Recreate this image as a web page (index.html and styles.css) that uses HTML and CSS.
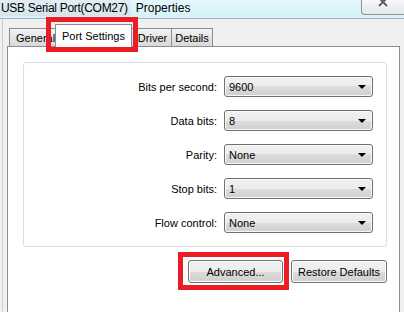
FILE: index.html
```html
<!DOCTYPE html>
<html>
<head>
<meta charset="utf-8">
<link rel="stylesheet" href="styles.css">
</head>
<body>
<div class="window">
  <div class="titlebar">
    <span class="title-app">USB Serial Port(COM27)</span>
    <span class="title-rest">Properties</span>
    <div class="close"><svg width="10" height="8" viewBox="0 0 10 8"><path d="M1 -2 L9 6 M9 -2 L1 6" stroke="#fff" stroke-width="4"/><path d="M1 -2 L9 6 M9 -2 L1 6" stroke="#5a5f66" stroke-width="2"/></svg></div>
  </div>
  <div class="body">
    <div class="tabs">
      <div class="tab first">General</div>
      <div class="tab active">Port Settings</div>
      <div class="tab driver">Driver</div>
      <div class="tab details">Details</div>
      <div class="mark mark-tab"></div>
    </div>
    <div class="panel">
      <div class="group">
        <div class="row"><span class="label">Bits per second:</span><div class="combo"><span>9600</span><i class="arrow"></i></div></div>
        <div class="row"><span class="label">Data bits:</span><div class="combo"><span>8</span><i class="arrow"></i></div></div>
        <div class="row"><span class="label">Parity:</span><div class="combo"><span>None</span><i class="arrow"></i></div></div>
        <div class="row"><span class="label">Stop bits:</span><div class="combo"><span>1</span><i class="arrow"></i></div></div>
        <div class="row"><span class="label">Flow control:</span><div class="combo"><span>None</span><i class="arrow"></i></div></div>
      </div>
      <div class="buttons">
        <div class="btn-wrap"><button class="btn adv">Advanced...</button><div class="mark mark-btn"></div></div>
        <button class="btn restore">Restore Defaults</button>
      </div>
    </div>
  </div>
</div>
</body>
</html>
```

FILE: styles.css
```css
* { box-sizing: border-box; }
html, body { margin: 0; padding: 0; }
body {
  width: 404px;
  height: 312px;
  overflow: hidden;
  background: #f0f0f0;
  font-family: "Liberation Sans", Arial, sans-serif;
  font-size: 11px;
  color: #000;
}
.window { width: 404px; height: 312px; }
.titlebar {
  height: 19px;
  display: flex;
  align-items: flex-start;
  background: linear-gradient(#e4f7fc, #d6f1f9);
  border-bottom: 1px solid #a9b3bb;
  font-size: 12px;
}
.title-app {
  height: 16px;
  padding: 1px 3px 0 1px;
  background: linear-gradient(#e2eef3, #d4e5ee);
  border-radius: 0 0 3px 0;
  letter-spacing: -0.3px;
}
.title-rest { padding: 1px 0 0 5px; }
.close {
  margin-left: auto;
  width: 43px;
  height: 15px;
  border: 1px solid #8d9299;
  border-top: none;
  border-right: none;
  border-radius: 0 0 0 4px;
  background: linear-gradient(#f6f8fa, #e3e8ec);
  display: flex;
  justify-content: center;
  align-items: flex-start;
}
.body {
  height: 292px;
  margin-left: 2px;
  border-left: 1px solid #c8cdd2;
  padding: 4px 4px 0 4px;
}
.tabs {
  position: relative;
  height: 24px;
  display: flex;
  align-items: flex-end;
  padding-left: 2px;
}
.tab {
  height: 19px;
  padding-top: 3px;
  text-align: center;
  border: 1px solid #898c95;
  border-bottom: none;
  background: linear-gradient(#f3f3f3, #e3e3e3 50%, #d8d8d8);
  margin-right: -1px;
  white-space: nowrap;
  overflow: hidden;
}
.tab.first { width: 48px; text-align: left; padding-left: 6px; }
.tab.active {
  position: relative;
  z-index: 1;
  height: 23px;
  margin: 0 -2px 0 -1px;
  padding-top: 5px;
  background: #fff;
  width: 77px;
}
.tab.driver { width: 42px; padding-left: 3px; }
.tab.details { width: 42px; }
.mark {
  position: absolute;
  border: 5px solid #ec1c24;
  z-index: 3;
  pointer-events: none;
}
.mark-tab { left: 39px; top: -6px; width: 92px; height: 35px; }
.panel {
  margin-top: -1px;
  height: 270px;
  width: 393px;
  border: 1px solid #898c95;
  background: #fff;
  padding: 15px 12px 0 15px;
  position: relative;
}
.group {
  width: 364px;
  height: 185px;
  border: 1px solid #d5dfe5;
  border-radius: 3px;
  padding: 13px 13px 0 0;
  display: flex;
  flex-direction: column;
  gap: 13px;
}
.row {
  display: flex;
  align-items: center;
  height: 21px;
}
.label {
  width: 200px;
  text-align: right;
  padding-right: 7px;
  color: #000;
}
.combo {
  width: 149px;
  height: 21px;
  border: 1px solid #707070;
  border-radius: 3px;
  background: linear-gradient(#f2f2f2, #ebebeb 50%, #dddddd 50%, #cfcfcf);
  display: flex;
  align-items: center;
  padding: 0 0 0 4px;
  box-shadow: inset 0 0 0 1px #f8f8f8;
}
.combo span { flex: 1; }
.arrow {
  width: 0;
  height: 0;
  border-left: 4px solid transparent;
  border-right: 4px solid transparent;
  border-top: 4px solid #000;
  margin-right: 6px;
}
.buttons {
  display: flex;
  justify-content: flex-end;
  gap: 8px;
  width: 364px;
  margin-top: 13px;
}
.btn-wrap { position: relative; }
.btn {
  height: 23px;
  border: 1px solid #707070;
  border-radius: 3px;
  background: linear-gradient(#f2f2f2, #ebebeb 50%, #dddddd 50%, #cfcfcf);
  box-shadow: inset 0 0 0 1px #fcfcfc;
  font-family: "Liberation Sans", Arial, sans-serif;
  font-size: 11px;
  color: #000;
  padding: 0;
  display: block;
}
.adv { width: 95px; }
.restore { width: 96px; }
.mark-btn { left: -10px; top: -8px; width: 111px; height: 38px; }
```
